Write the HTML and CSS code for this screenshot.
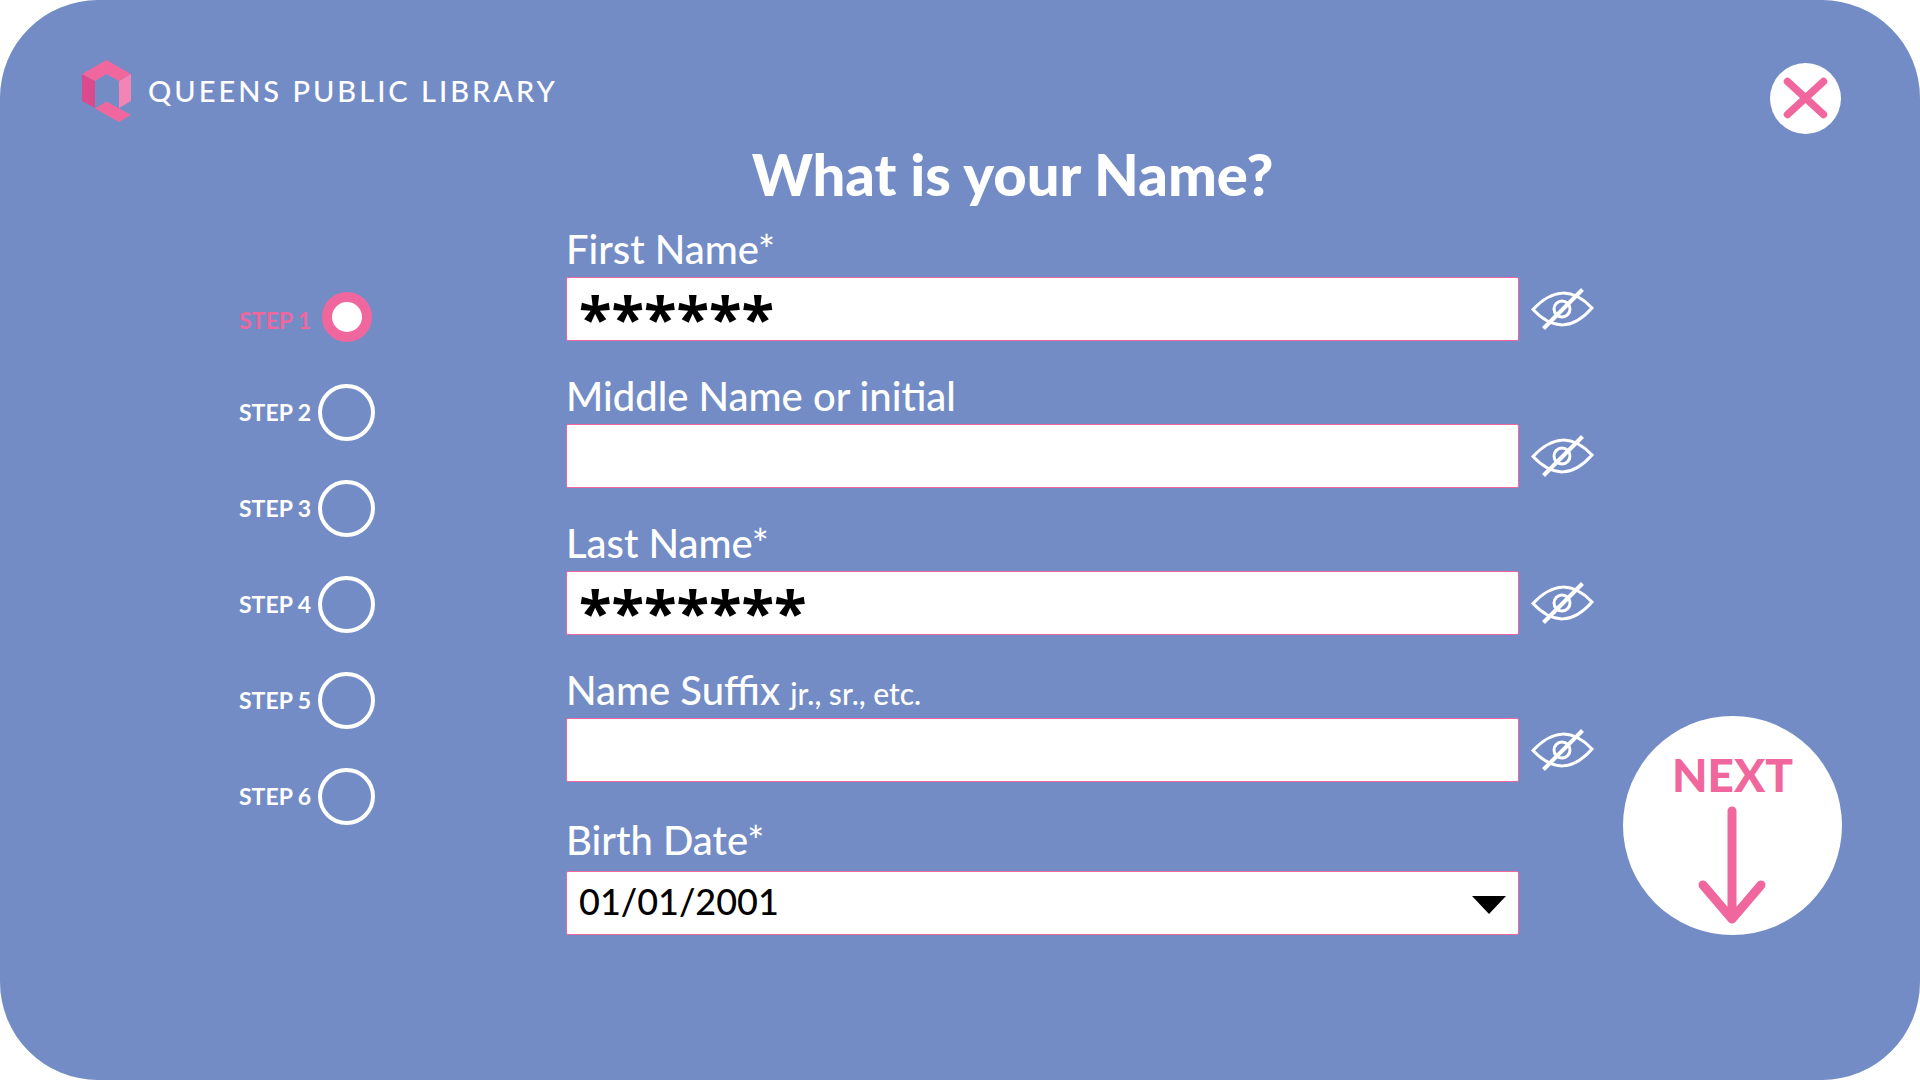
FILE: index.html
```html
<!DOCTYPE html>
<html lang="en">
<head>
    <meta charset="UTF-8">
    <meta name="viewport" content="width=device-width, initial-scale=1.0">
    <title>Queens Public Library</title>
    <link rel="stylesheet" href="styles.css">
</head>
<body>

<!-- eye icon shared by the fields -->
<svg class="sprite" aria-hidden="true">
    <symbol id="eye-off" viewBox="0 0 64 42">
        <path d="M2 21.500Q32 -10.500 61 20Q32 53 2 21.500Z" fill="none" stroke="#fff" stroke-width="3"/>
        <circle cx="31" cy="21" r="8" fill="none" stroke="#fff" stroke-width="3"/>
        <path d="M12.500 40.500L51.500 1.500" fill="none" stroke="#fff" stroke-width="4"/>
    </symbol>
</svg>

<div class="panel">
    <header class="header">
        <div class="logo">
            <svg class="logo-mark" viewBox="0 0 50 62" aria-hidden="true">
                <path d="M0 14L13 21V48L0 41Z" fill="#db4a8d"/>
                <path d="M49 14L37 21V48L49 41Z" fill="#f285b5"/>
                <path d="M0 14L24.500 0L49 14L37 21L24.500 14L13 21Z" fill="#f0679e"/>
                <path d="M13 48.500L24.500 41.500L49 55L37 62Z" fill="#f0679e"/>
            </svg>
            <span class="logo-text">QUEENS PUBLIC LIBRARY</span>
        </div>
        <button class="close" type="button" aria-label="Close">
            <svg viewBox="0 0 71 71" aria-hidden="true">
                <path d="M17.500 18.500L53.500 51.500M53.500 18.500L17.500 51.500" stroke="#f0679e" stroke-width="7.500" stroke-linecap="round"/>
            </svg>
        </button>
    </header>

    <main class="main">
        <ol class="steps">
            <li class="step active"><span>STEP 1</span><i class="dot"></i></li>
            <li class="step"><span>STEP 2</span><i class="dot"></i></li>
            <li class="step"><span>STEP 3</span><i class="dot"></i></li>
            <li class="step"><span>STEP 4</span><i class="dot"></i></li>
            <li class="step"><span>STEP 5</span><i class="dot"></i></li>
            <li class="step"><span>STEP 6</span><i class="dot"></i></li>
        </ol>

        <form class="form" id="name-form">
            <h1>What is your Name?</h1>

            <div class="field">
                <label for="first-name">First Name*</label>
                <input class="masked" type="text" id="first-name" value="******">
                <button class="eye" type="button" aria-label="Show first name"><svg><use href="#eye-off"/></svg></button>
            </div>

            <div class="field">
                <label for="middle-name">Middle Name or initial</label>
                <input class="masked" type="text" id="middle-name">
                <button class="eye" type="button" aria-label="Show middle name"><svg><use href="#eye-off"/></svg></button>
            </div>

            <div class="field">
                <label for="last-name">Last Name*</label>
                <input class="masked" type="text" id="last-name" value="*******">
                <button class="eye" type="button" aria-label="Show last name"><svg><use href="#eye-off"/></svg></button>
            </div>

            <div class="field">
                <label for="suffix">Name Suffix <small>jr., sr., etc.</small></label>
                <input class="masked" type="text" id="suffix">
                <button class="eye" type="button" aria-label="Show suffix"><svg><use href="#eye-off"/></svg></button>
            </div>

            <div class="field date">
                <label for="birth-date">Birth Date*</label>
                <div class="select">
                    <select id="birth-date">
                        <option>01/01/2001</option>
                    </select>
                </div>
            </div>
        </form>

        <button class="next" type="submit" form="name-form">
            <span>NEXT</span>
            <svg viewBox="0 0 70 118" aria-hidden="true">
                <path d="M34 5V110M5 79L34 113L63 79" fill="none" stroke="#f0679e" stroke-width="9" stroke-linecap="round" stroke-linejoin="round"/>
            </svg>
        </button>
    </main>
</div>

</body>
</html>
```
FILE: styles.css
```css
* {
    box-sizing: border-box;
}

body {
    margin: 0;
    background-color: white;
    font-family: Lato, "Open Sans", sans-serif;
    color: white;
}

button {
    padding: 0;
    border: none;
    background: none;
    font-family: inherit;
    cursor: pointer;
}

svg {
    display: block;
}

.sprite {
    display: none;
}

.panel {
    min-height: 100vh;
    background-color: #738cc5;
    border-radius: 98px;
}

.header {
    display: flex;
    justify-content: space-between;
    align-items: flex-start;
    padding: 60px 79px 0 82px;
}

.logo {
    display: flex;
    align-items: center;
    gap: 16px;
}

.logo-mark {
    width: 50px;
    height: 62px;
}

.logo-text {
    padding-bottom: 2px;
    font-size: 29px;
    font-weight: 500;
    letter-spacing: 3px;
}

.close {
    width: 71px;
    height: 71px;
    margin-top: 3px;
    border-radius: 50%;
    background-color: white;
}

.main {
    display: grid;
    grid-template-columns: 136px minmax(0, 1fr) 219px;
    padding: 4px 78px 0 239px;
}

.steps {
    display: flex;
    flex-direction: column;
    gap: 39px;
    margin: 0;
    padding: 150px 0 0;
    list-style: none;
    font-size: 23px;
    font-weight: bold;
}

.step {
    display: flex;
    justify-content: space-between;
    align-items: center;
    height: 57px;
    white-space: nowrap;
}

.step span {
    padding-bottom: 2px;
}

.dot {
    flex: none;
    width: 57px;
    height: 57px;
    border: 4px solid white;
    border-radius: 50%;
}

.active {
    color: #f0679e;
}

.active span {
    padding: 6px 0 0;
}

.active .dot {
    width: 50px;
    height: 50px;
    margin-right: 3px;
    border: 10px solid #f0679e;
    background-color: white;
}

.form {
    padding: 0 28px 0 191px;
}

h1 {
    margin: 0 0 12px;
    padding: 1px 136px 0 0;
    font-size: 58px;
    font-weight: 900;
    line-height: 70px;
    text-align: center;
}

.field {
    display: grid;
    grid-template-columns: 1fr 64px;
    column-gap: 12px;
    margin-bottom: 27px;
}

label {
    grid-column: 1 / -1;
    font-size: 40px;
    font-weight: 500;
    line-height: 56px;
}

small {
    font-size: 30px;
    line-height: 30px;
}

input, select {
    width: 100%;
    height: 64px;
    border: 1px solid #f0679e;
    border-radius: 2px;
    background-color: white;
    color: black;
    font-family: inherit;
    font-size: 36px;
    font-weight: 500;
}

.masked {
    padding: 15px 12px 0;
    font-family: "Noto Sans", sans-serif;
    font-size: 60px;
    font-weight: bold;
}

.eye {
    align-self: center;
    width: 64px;
    height: 42px;
}

.eye svg {
    width: 64px;
    height: 42px;
}

.date {
    margin: 30px 0 0;
}

.date label {
    margin-bottom: 3px;
}

.select {
    position: relative;
}

select {
    appearance: none;
    padding: 0 60px 4px 12px;
}

/* drop-down arrow */
.select::after {
    content: "";
    position: absolute;
    top: 25px;
    right: 13px;
    border: solid transparent;
    border-width: 18px 17px 0;
    border-top-color: black;
    pointer-events: none;
}

.next {
    display: flex;
    flex-direction: column;
    align-items: center;
    align-self: end;
    width: 219px;
    height: 219px;
    padding-top: 31px;
    border-radius: 50%;
    background-color: white;
    color: #f0679e;
    font-size: 46px;
    font-weight: 900;
    line-height: 56px;
}

.next svg {
    width: 70px;
    height: 118px;
    margin-top: 3px;
}
```
